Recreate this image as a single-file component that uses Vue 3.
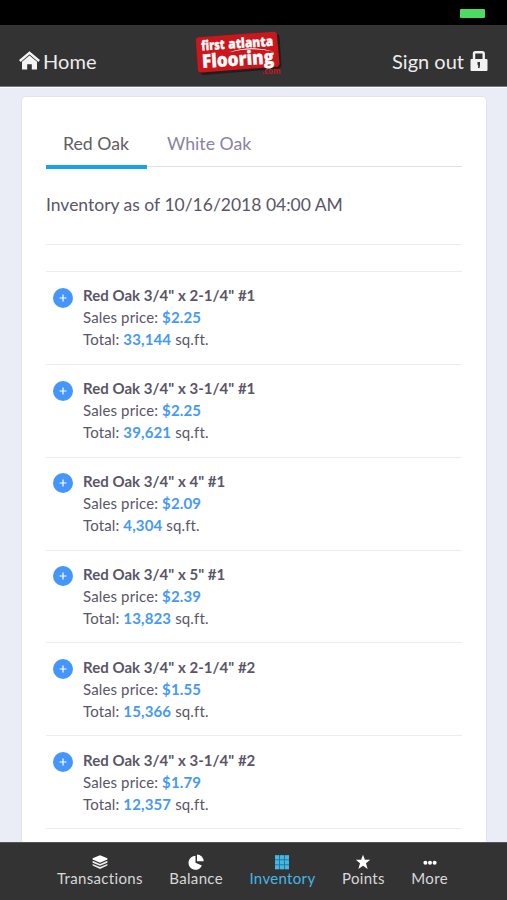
<script setup>
const items = [
  { name: 'Red Oak 3/4" x 2-1/4" #1', price: '$2.25', total: '33,144' },
  { name: 'Red Oak 3/4" x 3-1/4" #1', price: '$2.25', total: '39,621' },
  { name: 'Red Oak 3/4" x 4" #1', price: '$2.09', total: '4,304' },
  { name: 'Red Oak 3/4" x 5" #1', price: '$2.39', total: '13,823' },
  { name: 'Red Oak 3/4" x 2-1/4" #2', price: '$1.55', total: '15,366' },
  { name: 'Red Oak 3/4" x 3-1/4" #2', price: '$1.79', total: '12,357' },
]
</script>

<template>
  <div class="screen">
    <div class="status"><span class="battery"></span></div>
    <header class="header">
      <a class="side">
        <svg class="home-icon" width="21" height="19" viewBox="0 0 21 19">
          <path d="M.8 10 10.500 1.900l9.700 8.100" fill="none" stroke="#f4f4f4" stroke-width="2.400" />
          <path d="M3 10.700 10.500 4.500l7.500 6.200v7.800h-5.200v-5.200H8.200v5.200H3z" fill="#f4f4f4" />
        </svg>
        <span class="home-label">Home</span>
      </a>
      <svg class="logo" width="90" height="48" viewBox="0 0 90 48">
        <path d="M9 11 84 5q3.200 0 3.500 3l2 28q0 3.500-3.500 4L12 46q-3.500 0-4-3.500z" fill="#1c1a1a" opacity=".8" />
        <path d="M7 8.200 81.300 2.700q3.300-.2 3.600 3L87.500 34.200q.2 3.300-3.200 3.600L9.500 43.600q-3.300.2-3.600-3L3.900 11.700Q3.700 8.500 7 8.200z" fill="#cb161c" />
        <g class="logo-text">
          <text transform="translate(9.500 21.500) rotate(-3.700)" font-size="13.500" textLength="23.500" lengthAdjust="spacingAndGlyphs">first</text>
          <text transform="translate(36.500 19.700) rotate(-3.700)" font-size="13.500" textLength="45" lengthAdjust="spacingAndGlyphs">atlanta</text>
          <text transform="translate(10.500 39) rotate(-3.700)" font-size="19" textLength="72" lengthAdjust="spacingAndGlyphs">Flooring</text>
        </g>
        <path d="M37 23.200Q60 15.500 82 22.800 60 17.700 37 23.200z" fill="#fff" />
        <text x="70" y="45" class="logo-com" textLength="18.500" lengthAdjust="spacingAndGlyphs">.com</text>
      </svg>
      <a class="side">
        <span class="sign-label">Sign out</span>
        <svg class="lock-icon" width="18" height="20" viewBox="0 0 18 20">
          <path d="M4 9V2.500Q4 1.200 5.300 1.200h7Q13.700 1.200 13.700 2.500V9" fill="none" stroke="#f2f2f2" stroke-width="2.400" />
          <rect x=".5" y="8" width="17" height="12" rx="1" fill="#f2f2f2" />
          <path d="M7.500 11h2.500v3l-.4 3H8l.2-2.500-.7-1z" fill="#333" />
        </svg>
      </a>
    </header>

    <main class="content">
      <section class="card">
        <nav class="tabs">
          <a class="tab active">Red Oak</a>
          <a class="tab">White Oak</a>
        </nav>
        <p class="asof">Inventory as of 10/16/2018 04:00 AM</p>
        <ul class="list">
          <li v-for="item in items" :key="item.name" class="row">
            <svg class="plus" width="20" height="20" viewBox="0 0 20 20">
              <circle cx="10" cy="10" r="10" fill="#4596fa" />
              <path d="M10 6.500v7M6.500 10h7" stroke="#fff" stroke-width="1.200" />
            </svg>
            <div class="details">
              <div class="name">{{ item.name }}</div>
              <div class="line">Sales price: <b>{{ item.price }}</b></div>
              <div class="line">Total: <b>{{ item.total }}</b> sq.ft.</div>
            </div>
          </li>
        </ul>
      </section>
    </main>

    <footer class="bar">
      <a class="item">
        <svg width="16" height="16" viewBox="0 0 16 16">
          <path d="M8 1.200 15.400 4.300v1.300L8 8.700.6 5.600V4.300z" fill="#fff" />
          <path d="m.6 6.800 7.400 3.100 7.400-3.100v1.900L8 11.800.6 8.700zM.6 9.900 8 13l7.400-3.100v1.700L8 14.900.6 11.600z" fill="#eee" />
        </svg>
        <span>Transactions</span>
      </a>
      <a class="item">
        <svg width="16" height="16" viewBox="0 0 16 16">
          <path d="M7.500 1.800v7l6.400 2.800A7 7 0 1 1 7.500 1.800z" fill="#fff" />
          <path d="M9 .4A7 7 0 0 1 15.700 7.300H9z" fill="#fff" />
        </svg>
        <span>Balance</span>
      </a>
      <a class="item inventory">
        <svg width="16" height="16" viewBox="0 0 16 16">
          <path d="M1 1.200h14v14H1z" fill="#2c7796" />
          <path d="M1 1.200h4v4h-4zM6 1.200h4v4h-4zM11 1.200h4v4h-4zM1 6.200h4v4h-4zM6 6.200h4v4h-4zM11 6.200h4v4h-4zM1 11.200h4v4h-4zM6 11.200h4v4h-4zM11 11.200h4v4h-4z" fill="#43b7e8" />
        </svg>
        <span>Inventory</span>
      </a>
      <a class="item">
        <svg width="16" height="16" viewBox="0 0 16 16">
          <path d="m8 .8 1.900 5h5.300l-4.200 3.400 1.600 5.700L8 11.700l-4.600 3.200L5 9.200.8 5.800h5.300z" fill="#fff" />
        </svg>
        <span>Points</span>
      </a>
      <a class="item">
        <svg width="16" height="16" viewBox="0 0 16 16">
          <g fill="#fff"><circle cx="3.400" cy="8.800" r="2" /><circle cx="8" cy="8.800" r="2" /><circle cx="12.600" cy="8.800" r="2" /></g>
        </svg>
        <span>More</span>
      </a>
    </footer>
  </div>
</template>

<style>
body {
  overflow: hidden;
}
</style>

<style scoped>
.screen {
  display: flex;
  flex-direction: column;
  width: 507px;
  height: 900px;
  overflow: hidden;
  background: #eaedf6;
  font-family: Lato, sans-serif;
  color: #595668;
}
.status {
  flex: none;
  display: flex;
  justify-content: flex-end;
  height: 25px;
  padding: 9px 22px 0 0;
  box-sizing: border-box;
  background: #000;
}
.battery {
  width: 25px;
  height: 9px;
  border-radius: 1px;
  background: #4cd964;
}
.header {
  flex: none;
  display: grid;
  grid-template-columns: 173px 1fr auto;
  height: 62px;
  padding: 0 19px;
  box-sizing: border-box;
  background: #333;
  border-bottom: 1px solid #77787a;
}
.side {
  display: flex;
  align-items: flex-start;
  padding-top: 25px;
  gap: 3px;
  color: #ededed;
  font-size: 20px;
  line-height: 23px;
}
.home-icon { margin-top: 1px; }
.home-label { letter-spacing: 0.05px; }
.sign-label {
  margin-right: 3px;
  letter-spacing: 0;
}
.lock-icon { margin-top: 1px; }
.logo { margin-top: 4px; }
.logo-text {
  fill: #fff;
  stroke: #fff;
  stroke-width: 0.3px;
  font-family: "Open Sans", sans-serif;
  font-weight: 800;
}
.logo-com {
  fill: #c4171d;
  font: 700 8px "Open Sans", sans-serif;
}
.content {
  flex: 1;
  min-height: 0;
  padding: 8px 20px 0 21px;
  border-top: 1px solid #fafbfd;
  overflow: hidden;
}
.card {
  height: 780px;
  padding: 23px 24px 0;
  box-sizing: border-box;
  background: #fff;
  border: 1px solid #e2e4ec;
  border-radius: 5px;
}
.tabs {
  display: flex;
  height: 46px;
  border-bottom: 1px solid #dddfe7;
}
.tab {
  height: 49px;
  padding: 0 17px;
  box-sizing: border-box;
  font-size: 17.700px;
  line-height: 47px;
  white-space: nowrap;
  color: #8983a4;
}
.tab.active {
  width: 101px;
  color: #5f5d61;
  border-bottom: 4px solid #16a3ee;
}
.tab + .tab { padding-left: 20px; }
.asof {
  height: 77px;
  margin: 0;
  border-bottom: 1px solid #ececf0;
  font-size: 17.500px;
  line-height: 76px;
}
.list {
  margin: 26px 0 0;
  padding: 0;
  list-style: none;
  border-bottom: 1px solid #ececf0;
}
.row {
  display: flex;
  height: 92.850px;
  padding: 12.400px 0 0 7px;
  gap: 10px;
  box-sizing: border-box;
  border-top: 1px solid #ececf0;
}
.plus { margin-top: 3.300px; }
.details {
  font-size: 15px;
  line-height: 22px;
  white-space: nowrap;
}
.name {
  font-weight: 700;
  letter-spacing: 0.03px;
}
.line { letter-spacing: 0.14px; }
.line b { color: #4799f8; }
.bar {
  flex: none;
  display: flex;
  gap: 26.500px;
  height: 58px;
  padding: 11px 0 0 57px;
  box-sizing: border-box;
  background: #333;
  border-top: 1px solid #555;
}
.item {
  display: flex;
  flex-direction: column;
  align-items: center;
  font-size: 15px;
  line-height: 17px;
  letter-spacing: 0.33px;
  color: #d8d8d8;
}
.item.inventory { color: #43b7e8; }
</style>
